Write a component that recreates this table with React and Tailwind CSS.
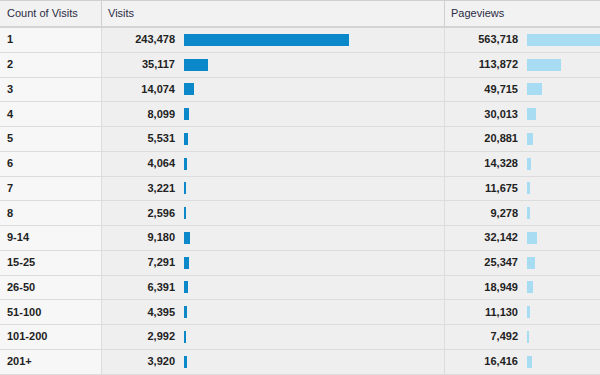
const rows = [
  ['1', 243478, 563718],
  ['2', 35117, 113872],
  ['3', 14074, 49715],
  ['4', 8099, 30013],
  ['5', 5531, 20881],
  ['6', 4064, 14328],
  ['7', 3221, 11675],
  ['8', 2596, 9278],
  ['9-14', 9180, 32142],
  ['15-25', 7291, 25347],
  ['26-50', 6391, 18949],
  ['51-100', 4395, 11130],
  ['101-200', 2992, 7492],
  ['201+', 3920, 16416],
]

const fmt = (n) => n.toLocaleString('en-US')

function MetricCell({ value, scale, barClass, border = true }) {
  const w = Math.max(2, Math.round(value * scale))
  return (
    <div className={`flex items-center bg-[#efefef] border-b border-[#dcdcdc] ${border ? 'border-r' : ''}`}>
      <span className="w-[73px] shrink-0 text-right font-bold text-[#222]">{fmt(value)}</span>
      <div className={`ml-[9px] h-[12px] shrink-0 ${barClass}`} style={{ width: w }} />
    </div>
  )
}

export default function App() {
  return (
    <div
      className="w-[600px] h-[375px] overflow-hidden bg-[#efefef] text-[11px] leading-none"
      style={{ fontFamily: '"Liberation Sans", Arial, sans-serif' }}
    >
      <div className="grid grid-cols-[102px_343px_1fr]">
        {/* Header */}
        <div className="h-[28px] flex items-center pl-[7px] bg-[#f2f2f2] border-t border-b-2 border-r border-[#d0d0d0] border-b-[#d4d4d4] text-[#2b2b44]">
          Count of Visits
        </div>
        <div className="h-[28px] flex items-center pl-[6px] bg-[#f2f2f2] border-t border-b-2 border-r border-[#d0d0d0] border-b-[#d4d4d4] text-[#2b2b44]">
          Visits
        </div>
        <div className="h-[28px] flex items-center pl-[6px] bg-[#f2f2f2] border-t border-b-2 border-[#d0d0d0] border-b-[#d4d4d4] text-[#2b2b44]">
          Pageviews
        </div>

        {/* Rows */}
        {rows.map(([label, visits, views]) => (
          <div key={label} className="contents">
            <div className="h-[24.75px] flex items-center pl-[7px] bg-[#f7f7f7] border-b border-r border-[#dcdcdc] font-bold text-[#222]">
              {label}
            </div>
            <MetricCell value={visits} scale={165 / 243478} barClass="bg-[#0a88c9]" />
            <MetricCell value={views} scale={168 / 563718} barClass="bg-[#a8dcf3]" border={false} />
          </div>
        ))}
      </div>
    </div>
  )
}
